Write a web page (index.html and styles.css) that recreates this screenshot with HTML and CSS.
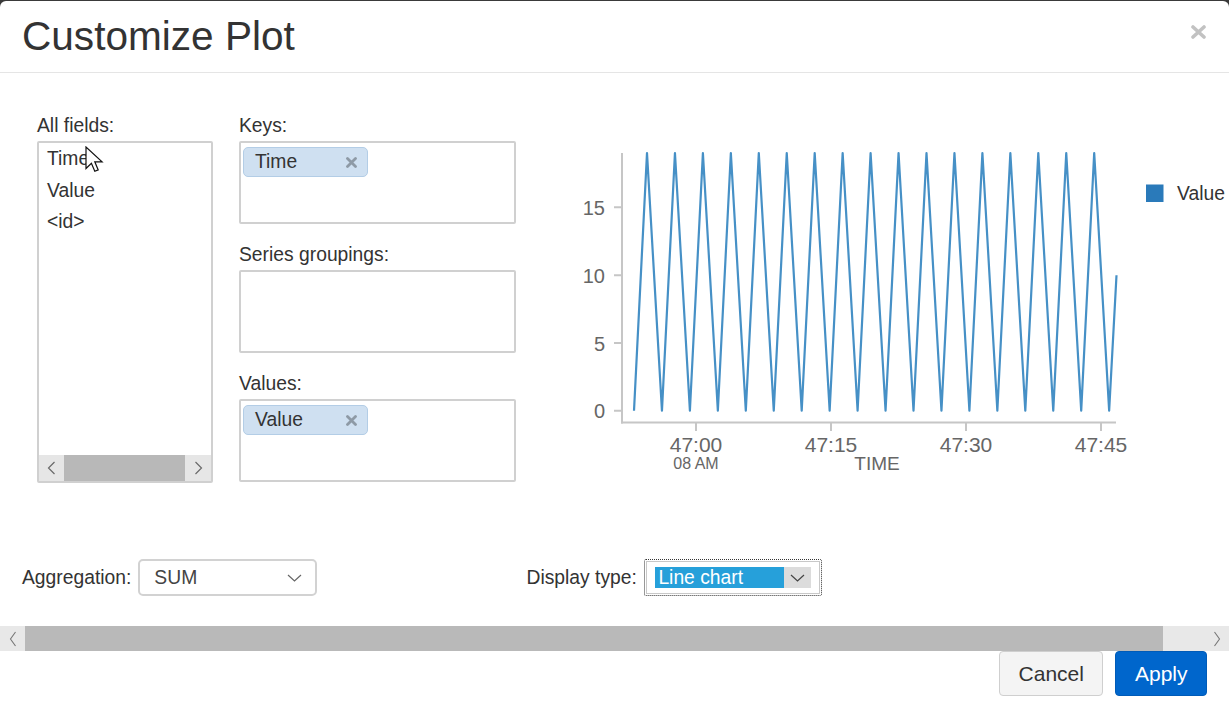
FILE: index.html
```html
<!DOCTYPE html>
<html>
<head>
<meta charset="utf-8">
<title>Customize Plot</title>
<link rel="stylesheet" href="styles.css">
</head>
<body>
<div class="modal">
  <header class="modal-header">
    <h1 class="title">Customize Plot</h1>
    <button class="close" aria-label="Close">
      <svg width="15" height="14" viewBox="0 0 15 14"><path d="M2 2 L13 12 M13 2 L2 12" stroke="#c2c2c2" stroke-width="3.6" stroke-linecap="round"/></svg>
    </button>
  </header>

  <div class="modal-body">
    <div class="fields-row">
      <div class="col-all">
        <div class="lbl">All fields:</div>
        <div class="listbox">
          <ul class="items">
            <li>Time</li>
            <li>Value</li>
            <li>&lt;id&gt;</li>
          </ul>
          <div class="sb-small">
            <span class="sb-btn"><svg width="9" height="14" viewBox="0 0 9 14"><path d="M7.5 1 L1.5 7 L7.5 13" fill="none" stroke="#6a6a6a" stroke-width="1.2"/></svg></span>
            <span class="sb-thumb"></span>
            <span class="sb-btn right"><svg width="9" height="14" viewBox="0 0 9 14"><path d="M1.5 1 L7.5 7 L1.5 13" fill="none" stroke="#6a6a6a" stroke-width="1.2"/></svg></span>
          </div>
        </div>
        <svg class="cursor" width="20" height="28" viewBox="0 0 20 28"><path d="M1 1 L1 22.5 L6.4 17.2 L9.8 25.3 L13.2 23.9 L9.8 15.8 L17.1 15.8 Z" fill="#fff" stroke="#111" stroke-width="1.2" stroke-linejoin="miter"/></svg>
      </div>

      <div class="col-mid">
        <div class="group">
          <div class="lbl">Keys:</div>
          <div class="dropbox">
            <span class="tag"><span>Time</span><svg width="11" height="11" viewBox="0 0 11 11"><path d="M1.5 1.5 L9.5 9.5 M9.5 1.5 L1.5 9.5" stroke="#8e9aa6" stroke-width="2.8" stroke-linecap="round"/></svg></span>
          </div>
        </div>
        <div class="group">
          <div class="lbl">Series groupings:</div>
          <div class="dropbox"></div>
        </div>
        <div class="group">
          <div class="lbl">Values:</div>
          <div class="dropbox">
            <span class="tag"><span>Value</span><svg width="11" height="11" viewBox="0 0 11 11"><path d="M1.5 1.5 L9.5 9.5 M9.5 1.5 L1.5 9.5" stroke="#8e9aa6" stroke-width="2.8" stroke-linecap="round"/></svg></span>
          </div>
        </div>
      </div>

      <div class="chart">
        <svg width="669" height="340" viewBox="0 0 669 340">
          <g stroke="#c6c6c6" stroke-width="2" fill="none">
            <path d="M62 13 L62 283.5"/>
            <path d="M61 282.5 L556 282.5"/>
            <path d="M54 67.3 L62 67.3 M54 135.3 L62 135.3 M54 203 L62 203 M54 270.7 L62 270.7"/>
            <path d="M136 282.5 L136 291 M271 282.5 L271 291 M406 282.5 L406 291 M541 282.5 L541 291"/>
          </g>
          <g class="ylab" text-anchor="end">
            <text x="45" y="75">15</text>
            <text x="45" y="143">10</text>
            <text x="45" y="210.7">5</text>
            <text x="45" y="278">0</text>
          </g>
          <g class="xlab" text-anchor="middle">
            <text x="136" y="311.7">47:00</text>
            <text x="271" y="311.7">47:15</text>
            <text x="406" y="311.7">47:30</text>
            <text x="541" y="311.7">47:45</text>
          </g>
          <text class="sublab" x="136" y="329" text-anchor="middle">08 AM</text>
          <text class="axtitle" x="317" y="330" text-anchor="middle">TIME</text>
          <polyline fill="none" stroke="#4690c6" stroke-width="2.2" stroke-linejoin="round"
            points="74,270.7 87,13 101.95,270.7 114.95,13 129.9,270.7 142.9,13 157.85,270.7 170.85,13 185.8,270.7 198.8,13 213.75,270.7 226.75,13 241.7,270.7 254.7,13 269.65,270.7 282.65,13 297.6,270.7 310.6,13 325.55,270.7 338.55,13 353.5,270.7 366.5,13 381.45,270.7 394.45,13 409.4,270.7 422.4,13 437.35,270.7 450.35,13 465.3,270.7 478.3,13 493.25,270.7 506.25,13 521.2,270.7 534.2,13 549.15,270.7 556.5,135.3"/>
          <rect x="586" y="44.5" width="17.5" height="17.5" fill="#2a7aba"/>
          <text class="legend" x="617" y="60">Value</text>
        </svg>
      </div>
    </div>

    <div class="controls">
      <div class="ctl agg">
        <span class="ctl-label">Aggregation:</span>
        <div class="select">
          <span>SUM</span>
          <svg width="15" height="8" viewBox="0 0 15 8"><path d="M1 1 L7.5 7 L14 1" fill="none" stroke="#666" stroke-width="1.2"/></svg>
        </div>
      </div>
      <div class="ctl disp">
        <span class="ctl-label">Display type:</span>
        <div class="dselect">
          <div class="dinner">
            <span class="dtext">Line chart</span>
            <span class="dbtn"><svg width="15" height="8" viewBox="0 0 15 8"><path d="M1 1 L7.5 7 L14 1" fill="none" stroke="#444" stroke-width="1.2"/></svg></span>
          </div>
        </div>
      </div>
    </div>

    <div class="sb-main">
      <span class="sbm-btn"><svg width="8" height="16" viewBox="0 0 8 16"><path d="M6.5 1 L1.5 8 L6.5 15" fill="none" stroke="#777" stroke-width="1.1"/></svg></span>
      <span class="sbm-thumb"></span>
      <span class="sbm-space"></span>
      <span class="sbm-btn"><svg width="8" height="16" viewBox="0 0 8 16"><path d="M1.5 1 L6.5 8 L1.5 15" fill="none" stroke="#777" stroke-width="1.1"/></svg></span>
    </div>
  </div>

  <footer class="modal-footer">
    <button class="btn cancel">Cancel</button>
    <button class="btn apply">Apply</button>
  </footer>
</div>
</body>
</html>
```

FILE: styles.css
```css
html, body {
  margin: 0;
  padding: 0;
}
body {
  background: #3a3a3a;
  font-family: "Liberation Sans", Arial, sans-serif;
  color: #333;
  height: 713px;
  overflow: hidden;
}
.modal {
  margin-top: 1px;
  height: 712px;
  background: #fff;
  border-radius: 6px 6px 0 0;
  display: flex;
  flex-direction: column;
}
.modal-header {
  display: flex;
  justify-content: space-between;
  align-items: flex-start;
  padding: 13px 23px 14px 22px;
  border-bottom: 1px solid #e5e5e5;
}
.title {
  margin: 0;
  font-size: 40.6px;
  font-weight: normal;
  line-height: 44px;
  color: #333;
}
.close {
  border: 0;
  background: none;
  padding: 0;
  margin-top: 11px;
  width: 15px;
  height: 14px;
  display: block;
  cursor: pointer;
}
.close svg { display: block; }

.modal-body {
  padding-top: 43px;
}
.fields-row {
  display: flex;
  align-items: flex-start;
}
.col-all {
  margin-left: 37px;
  width: 176px;
  position: relative;
}
.col-mid {
  margin-left: 26px;
  width: 277px;
}
.chart {
  margin-left: 44px;
  margin-top: 24px;
}
.chart svg { display: block; }

.lbl {
  font-size: 19.3px;
  line-height: 20px;
  margin-bottom: 5px;
}
.listbox {
  height: 342px;
  box-sizing: border-box;
  border: 2px solid #d0d0d0;
  border-radius: 2px;
  display: flex;
  flex-direction: column;
}
.items {
  list-style: none;
  margin: 0;
  padding: 0 8px;
  flex: 1;
  font-size: 19.3px;
  line-height: 31.6px;
}
.sb-small {
  height: 26px;
  display: flex;
  background: #e6e6e6;
}
.sb-btn {
  width: 25px;
  display: flex;
  align-items: center;
  justify-content: center;
}
.sb-btn.right { width: 26px; }
.sb-thumb {
  width: 121px;
  background: #b8b8b8;
}
.cursor {
  position: absolute;
  left: 48px;
  top: 30px;
}

.group + .group { margin-top: 21px; }
.dropbox {
  height: 83px;
  box-sizing: border-box;
  border: 2px solid #d0d0d0;
  border-radius: 2px;
  padding: 4px 2px;
}
.tag {
  display: flex;
  align-items: center;
  justify-content: space-between;
  width: 125px;
  height: 30px;
  box-sizing: border-box;
  border: 1px solid #b3cde6;
  background: #cfe0f1;
  border-radius: 5px;
  padding: 0 10px 0 11px;
  font-size: 19.3px;
  line-height: 28px;
}
.tag svg { display: block; }

.ylab text { font-size: 20px; fill: #666; }
.xlab text { font-size: 21px; fill: #666; }
.sublab { font-size: 16px; fill: #666; }
.axtitle { font-size: 19px; fill: #666; }
.legend { font-size: 19.3px; fill: #333; }

.controls {
  margin-top: 76px;
  height: 37px;
  display: flex;
  align-items: center;
  padding-left: 22px;
}
.ctl {
  display: flex;
  align-items: center;
  font-size: 19.3px;
}
.agg { width: 504.5px; }
.select {
  margin-left: 7px;
  width: 179px;
  height: 37px;
  box-sizing: border-box;
  border: 2px solid #d2d2d2;
  border-radius: 5px;
  display: flex;
  align-items: center;
  justify-content: space-between;
  padding: 0 13px 0 14px;
  color: #444;
}
.select svg { display: block; }
.dselect {
  margin-left: 7.5px;
  width: 178px;
  height: 37px;
  box-sizing: border-box;
  border: 1px dotted #333;
  border-radius: 2px;
  padding: 1px;
}
.dinner {
  height: 100%;
  box-sizing: border-box;
  border: 1px solid #c8c8c8;
  padding: 5px 8px 5px 8px;
  display: flex;
}
.dtext {
  flex: 1;
  background: #26a0da;
  color: #fff;
  line-height: 21px;
  padding-left: 3px;
}
.dbtn {
  width: 27px;
  background: #dcdcdc;
  display: flex;
  align-items: center;
  justify-content: center;
}
.dbtn svg { display: block; }

.sb-main {
  margin-top: 30px;
  height: 25px;
  display: flex;
  background: #e8e8e8;
}
.sbm-btn {
  width: 25px;
  display: flex;
  align-items: center;
  justify-content: center;
}
.sbm-thumb {
  width: 1138px;
  background: #b9b9b9;
}
.sbm-space { flex: 1; }

.modal-footer {
  display: flex;
  justify-content: flex-end;
  gap: 12px;
  padding-right: 22px;
}
.btn {
  height: 45px;
  font-family: "Liberation Sans", Arial, sans-serif;
  font-size: 21px;
  padding: 0 18.5px;
  border-radius: 4px;
  cursor: pointer;
}
.cancel {
  background: #f4f4f4;
  border: 1px solid #cfcfcf;
  color: #333;
}
.apply {
  background: #0066cc;
  border: 1px solid #005bb8;
  color: #fff;
}
```
